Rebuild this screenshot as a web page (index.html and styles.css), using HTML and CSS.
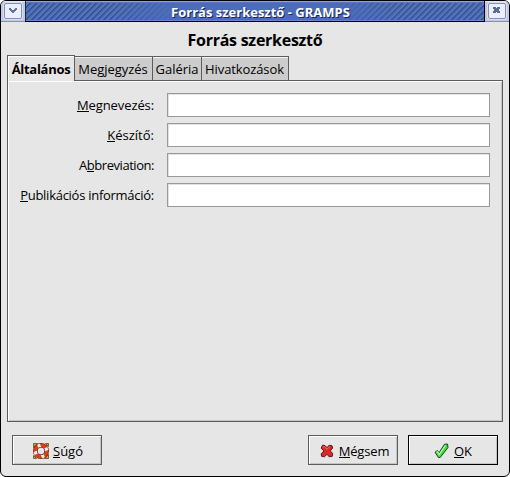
FILE: index.html
```html
<!DOCTYPE html>
<html lang="hu">
<head>
<meta charset="utf-8">
<title>Forrás szerkesztő - GRAMPS</title>
<link rel="stylesheet" href="styles.css">
</head>
<body>
<div class="window">
  <header class="titlebar">
    <div class="cap cap-left"><span class="wm-button"><svg width="16" height="14" viewBox="0 0 16 14" shape-rendering="crispEdges"><path d="M4 4h2v1h1v1h2v-1h1v-1h2v2h-1v1h-1v1h-1v1h-2v-1h-1v-1h-1v-1h-1z" fill="#6275a6"/></svg></span></div>
    <div class="caption"><span class="caption-text">Forrás szerkesztő - GRAMPS</span></div>
    <div class="cap cap-right"><span class="wm-button"><svg width="16" height="14" viewBox="0 0 16 14" shape-rendering="crispEdges"><path d="M4 3h3v1h1v-1h3v2h-1v2h1v2h-3v-1h-1v1h-3v-2h1v-2h-1z" fill="#5a6c9c"/></svg></span></div>
  </header>
  <h1 class="heading"><span>Forrás szerkesztő</span></h1>
  <nav class="tabs">
    <div class="tab tab-active"><span>Általános</span></div>
    <div class="tab tab-notes"><span>Megjegyzés</span></div>
    <div class="tab tab-gallery"><span>Galéria</span></div>
    <div class="tab tab-refs"><span>Hivatkozások</span></div>
  </nav>
  <main class="panel">
    <form class="fields">
      <label for="title"><span class="l1"><u>M</u>egnevezés:</span></label><input id="title" type="text">
      <label for="author"><span class="l2"><u>K</u>észítő:</span></label><input id="author" type="text">
      <label for="abbr"><span class="l3">A<u>b</u>breviation:</span></label><input id="abbr" type="text">
      <label for="pub"><span class="l4"><u>P</u>ublikációs információ:</span></label><input id="pub" type="text">
    </form>
  </main>
  <footer class="actions">
    <button class="button help" type="button">
      <svg width="18" height="18" viewBox="0 0 18 18"><path d="M1.500 1.500h4l-4 4zM16.500 1.500h-3l3 3zM1.500 16.500h3l-3-3zM16.500 16.500h-4l4-4z" fill="#c4ac34" stroke="#5a4c14" stroke-width=".8"/><circle cx="9" cy="9" r="8" fill="#7a2a18"/><circle cx="9" cy="9" r="7.300" fill="#dd3e1a"/><g stroke="#fbe9df" stroke-width="3"><path d="M6.500 2.200L7.800 5.500M10.200 12.500l1.300 3.300M15.800 6.500l-3.300 1.300M5.500 10.200l-3.300 1.300"/></g><circle cx="9" cy="9" r="4" fill="#6e4238"/><circle cx="9" cy="9" r="3.200" fill="#e6e6e6"/></svg>
      <span><u>S</u>úgó</span>
    </button>
    <button class="button cancel" type="button">
      <svg width="14" height="14" viewBox="0 0 14 14"><path d="M2.500 1.200L5 1.500l2 2.200 2-2.400 3 .400.600 2.300L10.300 6.900l2.400 2.600-.500 2.900-3 .400L7 10.300l-2.600 2.500-2.800-.500-.400-2.500L3.900 7 1.200 4.200z" fill="#d72b2b" stroke="#641414"/><path d="M2.600 3l1.800-.500L7 5.300 9.600 2.500" fill="none" stroke="#f26b62"/></svg>
      <span><u>M</u>égsem</span>
    </button>
    <button class="button ok" type="button">
      <svg width="15" height="16" viewBox="0 0 15 16"><path d="M1 9.200l2.400-1.700 1.800 2L10.500 1.200l3-.200.500 3.500L6.200 14.500H4.400z" fill="#3fd83f" stroke="#174d17"/><path d="M2.400 9.200l1.200-.4 1.600 2.800L11.400 2.500" fill="none" stroke="#c0f5b7" stroke-width="1.200"/></svg>
      <span><u>O</u>K</span>
    </button>
  </footer>
</div>
</body>
</html>
```
FILE: styles.css
```css
* { box-sizing: border-box; }
html { background: #fff; }
body { margin: 0; font: 13px/16px "Open Sans", "Noto Sans", sans-serif; color: #000; }
span { white-space: nowrap; }
svg { display: block; flex: none; }
u { text-decoration: none; box-shadow: 0 1px 0 #000; display: inline-block; height: 14px; line-height: 16px; }

.window {
  width: 510px; height: 477px;
  display: flex; flex-direction: column;
  background: #e6e6e6;
  border: 1px solid #000;
  border-radius: 6px;
  overflow: hidden;
}

.titlebar { display: flex; height: 21px; flex: none; border-bottom: 1px solid #000; }
.cap { width: 24px; display: flex; align-items: center; justify-content: center; background: #c0c8e2; margin-bottom: -1px; border-bottom: 1px solid #8491b8; box-shadow: inset 0 1px #e6eaf7; }
.cap-right { width: 24px; }
.wm-button { width: 18px; height: 16px; border: 1px solid #8490b8; border-radius: 2px; background: #eceefa; box-shadow: 0 0 0 1px #d8def0; }
.caption {
  flex: 1; display: flex; justify-content: center; padding-left: 11px;
  border-left: 1px solid #17284c; border-right: 1px solid #000;
  background:
    linear-gradient(#8ba0dc, #8ba0dc) 0 0 / 100% 1px no-repeat,
    linear-gradient(#5775c0, #5775c0) 0 1px / 100% 1px no-repeat,
    linear-gradient(#6c86cc, #6c86cc) 0 19px / 100% 1px no-repeat,
    radial-gradient(ellipse 150px 40px at center, #4c6cb9 50%, rgba(76,108,185,0) 100%),
    repeating-linear-gradient(135deg, #34548f 0 .700px, #4b6bb7 1.400px 2.400px, #6481c8 3.200px, #34548f 4.240px);
}
.caption-text { font: bold 13px/22px "Open Sans", sans-serif; color: #fff; text-shadow: 1px 1px #17284c; }

.heading { margin: 0; height: 33px; text-align: center; font: bold 16px/36px "Open Sans", sans-serif; letter-spacing: -.27px; }

.tabs { display: flex; height: 26px; flex: none; padding-left: 6px; align-items: flex-end; position: relative; z-index: 1; }
.tab { height: 25px; display: flex; align-items: center; justify-content: center; background: #cdcdcd; border: 1px solid #5c5c5c; border-left: 0; box-shadow: inset 0 1px #f4f4f4; }
.tab-active { width: 68px; height: 26px; background: #e6e6e6; border-left: 1px solid #5c5c5c; border-bottom: 0; font-weight: bold; letter-spacing: -.3px; box-shadow: inset 1px 1px #fff; padding-top: 1px; }
.tab-notes { width: 78px; padding-right: 1px; letter-spacing: -.05px; }
.tab-gallery { width: 49px; }
.tab-refs { width: 87px; letter-spacing: -.1px; padding-right: 1px; }

.panel { width: 496px; height: 342px; margin: -1px 0 0 6px; flex: none; border: 1px solid #5c5c5c; box-shadow: inset 1px 1px #fff, inset -1px -1px #c4c4c4; padding: 12px; }
.fields { display: grid; grid-template-columns: 134px 323px; grid-auto-rows: 24px; gap: 6px 13px; }
.fields label { display: flex; justify-content: flex-end; align-items: center; }
.l1 { letter-spacing: -.1px; }
.l3 { letter-spacing: -.46px; }
.l4 { letter-spacing: -.27px; }
.fields input { width: 323px; height: 24px; margin: 0; padding: 2px; border: 1px solid #999; border-radius: 0; background: #fff; outline: 0; box-shadow: inset 1px 1px #e2e2e2; }

.actions { display: flex; padding: 13px 11px 0 11px; }
.button { width: 90px; height: 30px; padding: 1px 0 0; margin: 0; display: flex; align-items: center; justify-content: center; gap: 3px; font: inherit; color: #000; background: #e6e6e6; border: 1px solid #5c5c5c; border-radius: 0; box-shadow: inset 1px 1px #fff, inset -1px -1px #c4c4c4; }
.help { padding-left: 1px; }
.cancel { margin-left: auto; margin-right: 10px; gap: 5px; padding-left: 3px; }
.cancel span { letter-spacing: -.15px; }
.ok { border-color: #000; gap: 5px; }
```
